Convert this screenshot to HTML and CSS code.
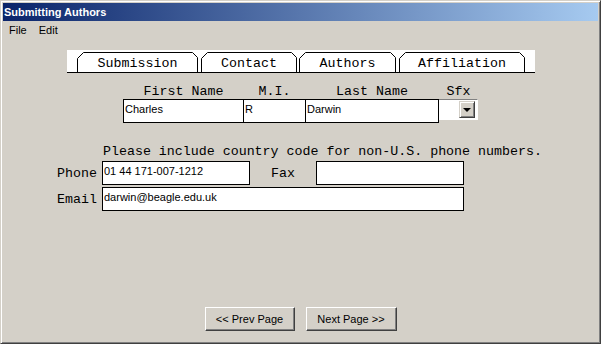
FILE: index.html
```html
<!DOCTYPE html>
<html lang="en">
<head>
    <meta charset="UTF-8">
    <title>Submitting Authors</title>
    <link rel="stylesheet" href="styles.css">
</head>
<body>

    <div class="window">
        <div class="titlebar">Submitting Authors</div>

        <div class="menubar">
            <span class="menu-item">File</span>
            <span class="menu-item">Edit</span>
        </div>

        <div class="content">
            <div class="tabstrip">
                <div class="tab tab-submission">
                    <svg class="tab-shape" width="121" height="20"><path d="M0.5,20 V6.5 L6.5,0.5 H115.5 L120.5,5.5 V20" fill="#fff" stroke="#000"/></svg>
                    <span>Submission</span>
                </div>
                <div class="tab tab-contact">
                    <svg class="tab-shape" width="96" height="20"><path d="M0.5,20 V6.5 L6.5,0.5 H90.5 L95.5,5.5 V20" fill="#fff" stroke="#000"/></svg>
                    <span>Contact</span>
                </div>
                <div class="tab tab-authors">
                    <svg class="tab-shape" width="97" height="20"><path d="M0.5,20 V6.5 L6.5,0.5 H91.5 L96.5,5.5 V20" fill="#fff" stroke="#000"/></svg>
                    <span>Authors</span>
                </div>
                <div class="tab tab-affiliation">
                    <svg class="tab-shape" width="126" height="20"><path d="M0.5,20 V6.5 L6.5,0.5 H120.5 L125.5,5.5 V20" fill="#fff" stroke="#000"/></svg>
                    <span>Affiliation</span>
                </div>
            </div>

            <div class="name-row">
                <div class="field field-first">
                    <label for="first">First Name</label>
                    <input type="text" id="first" value="Charles">
                </div>
                <div class="field field-mi">
                    <label for="mi">M.I.</label>
                    <input type="text" id="mi" value="R">
                </div>
                <div class="field field-last">
                    <label for="last">Last Name</label>
                    <input type="text" id="last" value="Darwin">
                </div>
                <div class="field field-sfx">
                    <label>Sfx</label>
                    <div class="combo">
                        <span class="combo-btn"><span class="arrow"></span></span>
                    </div>
                </div>
            </div>

            <p class="note">Please include country code for non-U.S. phone numbers.</p>

            <div class="contact-grid">
                <label for="phone">Phone</label>
                <input type="text" id="phone" value="01 44 171-007-1212">
                <label for="fax" class="fax-label">Fax</label>
                <input type="text" id="fax" value="">

                <label for="email">Email</label>
                <input type="text" id="email" class="email" value="darwin@beagle.edu.uk">
            </div>

            <div class="buttons">
                <button class="btn btn-prev">&lt;&lt; Prev Page</button>
                <button class="btn btn-next">Next Page &gt;&gt;</button>
            </div>
        </div>
    </div>

</body>
</html>
```

FILE: styles.css
```css
* {
    box-sizing: border-box;
}

body {
    margin: 0;
    background-color: #d4d0c8;
    font-family: "Liberation Sans", Arial, sans-serif;
    font-size: 11px;
}

.window {
    width: 601px;
    height: 344px;
    display: flex;
    flex-direction: column;
    background-color: #d4d0c8;
    border: 1px solid;
    border-color: #d4d0c8 #404040 #404040 #d4d0c8;
    box-shadow: inset 1px 1px #fff, inset -1px -1px #808080;
    padding: 2px;
}

.titlebar {
    height: 18px;
    line-height: 18px;
    padding-left: 1px;
    color: #fff;
    font-weight: bold;
    font-size: 11px;
    background: linear-gradient(to right, #0a246a, #a6caf0);
}

.menubar {
    height: 18px;
    line-height: 18px;
    display: flex;
}

.menu-item {
    padding: 0 6px;
    color: #000;
}

.content {
    flex: 1;
    display: flex;
    flex-direction: column;
    padding-top: 11px;
}

/* tabs */
.tabstrip {
    margin-left: 64px;
    width: 468px;
    height: 23px;
    padding: 2px 0 0 10px;
    background-color: #fff;
    border-bottom: 1px solid #000;
    display: flex;
    gap: 3px;
}

.tab {
    position: relative;
    height: 20px;
    display: flex;
    justify-content: center;
    font-family: "Liberation Mono", "Courier New", monospace;
    font-size: 13.3px;
    line-height: 18px;
    padding-top: 3px;
}

.tab span {
    position: relative;
}

.tab-shape {
    position: absolute;
    left: 0;
    top: 0;
}

.tab-submission { width: 121px; }
.tab-contact { width: 96px; }
.tab-authors { width: 97px; margin-left: -1px; }
.tab-affiliation { width: 126px; }

/* name fields */
.name-row {
    display: flex;
    margin: 11px 0 0 120px;
}

.field {
    display: flex;
    flex-direction: column;
    align-items: center;
}

.field label {
    font-family: "Liberation Mono", "Courier New", monospace;
    font-size: 13.3px;
    line-height: 16px;
    height: 15px;
}

input[type="text"] {
    width: 100%;
    height: 24px;
    margin: 0;
    border: 1px solid #000;
    background-color: #fff;
    padding: 3px 1px 7px;
    font-family: "Liberation Sans", Arial, sans-serif;
    font-size: 11px;
    line-height: 13px;
    color: #000;
    outline: none;
}

.field-first { width: 121px; }
.field-mi { width: 63px; margin-left: -1px; }
.field-last { width: 134px; margin-left: -1px; }
.field-sfx { width: 39px; }

.combo {
    width: 39px;
    height: 21px;
    align-self: flex-start;
    background-color: #fff;
    border-top: 1px solid #808080;
    border-right: 1px solid #fff;
    border-bottom: 1px solid #fff;
    box-shadow: 1px 1px #d4d0c8;
    display: flex;
    justify-content: flex-end;
    padding: 1px 2px 0 0;
}

.combo-btn {
    width: 16px;
    height: 17px;
    background-color: #d4d0c8;
    border: 1px solid;
    border-color: #d4d0c8 #404040 #404040 #d4d0c8;
    box-shadow: inset 1px 1px #fff, inset -1px -1px #808080;
    display: flex;
    align-items: center;
    justify-content: center;
}

.arrow {
    width: 0;
    height: 0;
    border-left: 4px solid transparent;
    border-right: 4px solid transparent;
    border-top: 4px solid #000;
    margin-top: 1px;
}

/* contact */
.note {
    margin: 21px 0 0 100px;
    font-family: "Liberation Mono", "Courier New", monospace;
    font-size: 13.3px;
    line-height: 15px;
}

.contact-grid {
    display: grid;
    grid-template-columns: 45px 148px 66px 148px;
    row-gap: 2px;
    align-items: center;
    margin: 2px 0 0 54px;
}

.contact-grid label {
    font-family: "Liberation Mono", "Courier New", monospace;
    font-size: 13.3px;
}

.contact-grid .fax-label {
    text-align: center;
}

.contact-grid .email {
    grid-column: 2 / 5;
}

/* buttons */
.buttons {
    margin-top: auto;
    margin-bottom: 10px;
    display: flex;
    justify-content: center;
    gap: 11px;
}

.btn {
    height: 24px;
    padding: 0;
    background-color: #d4d0c8;
    border: 1px solid;
    border-color: #fff #404040 #404040 #fff;
    box-shadow: inset -1px -1px #808080;
    font-family: "Liberation Sans", Arial, sans-serif;
    font-size: 11px;
    color: #000;
}

.btn-prev { width: 90px; }
.btn-next { width: 91px; }
```
